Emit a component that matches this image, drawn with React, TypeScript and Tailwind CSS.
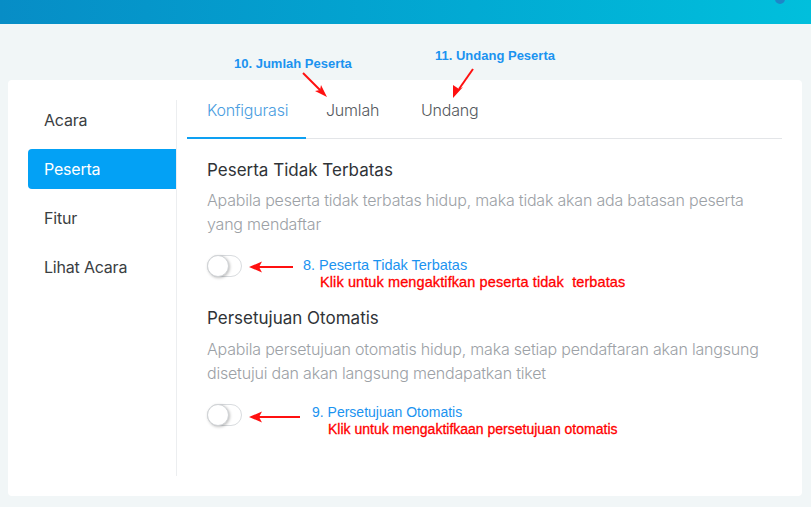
import React from "react";

const ui = { fontFamily: "Inter, 'Noto Sans', sans-serif" };
const ann = { fontFamily: "'Liberation Sans', Arial, sans-serif" };

function Toggle() {
  return (
    <div className="relative h-[22px] w-[35px] rounded-full border border-[#d9dcdf] bg-white">
      <div className="absolute left-[-1px] top-[-1px] h-[22px] w-[22px] rounded-full border border-[#d0d3d6] bg-white shadow-[1px_1px_3px_rgba(0,0,0,0.25)]" />
    </div>
  );
}

export default function App() {
  const menu = ["Acara", "Peserta", "Fitur", "Lihat Acara"];
  return (
    <div className="relative flex h-[507px] w-full flex-col overflow-hidden bg-[#f1f6f7] tracking-[-0.2px]" style={ui}>
      <div className="relative h-[24px] w-full bg-gradient-to-r from-[#078dc6] to-[#01bfdc]">
        <div className="absolute right-[26px] top-[-6px] h-[10px] w-[10px] rounded-full bg-[#1e86c8]" />
      </div>

      <div className="mx-[8px] mt-[56px] flex h-[416px] w-[794px] rounded-[4px] bg-white">
        <div className="my-[20px] flex w-[169px] flex-col gap-[9px] border-r border-[#eceef0] pl-[20px]">
          {menu.map((m) => (
            <div
              key={m}
              className={
                m === "Peserta"
                  ? "flex h-[40px] items-center rounded-l-[4px] bg-[#03a1f5] pl-[16px] text-[16px] text-white"
                  : "flex h-[40px] items-center pl-[16px] text-[16px] text-[#3a3e42]"
              }
            >
              {m}
            </div>
          ))}
        </div>

        <div className="flex flex-1 flex-col pl-[10px] pr-[20px] pt-[20px]">
          <div className="flex border-b border-[#e3e5e8]">
            <div className="-mb-px w-[119px] border-b-2 border-[#0ea0f2] pl-[20px] pb-[17px] text-[16px] font-light leading-[20px] text-[#4a9de0]">
              Konfigurasi
            </div>
            <div className="w-[95px] pl-[20px] pb-[17px] text-[16px] font-light leading-[20px] text-[#55595e]">Jumlah</div>
            <div className="pl-[20px] pb-[17px] text-[16px] font-light leading-[20px] text-[#55595e]">Undang</div>
          </div>

          <div className="flex flex-col pl-[20px]">
            <div className="mt-[19px] text-[17px] leading-[24px] tracking-normal text-[#2f3337]">Peserta Tidak Terbatas</div>
            <div className="mt-[6px] text-[16px] font-light leading-[24px] text-[#9ca1a6]">
              Apabila peserta tidak terbatas hidup, maka tidak akan ada batasan peserta yang mendaftar
            </div>
            <div className="mt-[19px]">
              <Toggle />
            </div>

            <div className="mt-[29px] text-[17px] leading-[24px] tracking-normal text-[#2f3337]">Persetujuan Otomatis</div>
            <div className="mt-[7px] text-[16px] font-light leading-[24px] text-[#9ca1a6]">
              Apabila persetujuan otomatis hidup, maka setiap pendaftaran akan langsung disetujui dan akan langsung mendapatkan tiket
            </div>
            <div className="mt-[19px]">
              <Toggle />
            </div>
          </div>
        </div>
      </div>

      {/* annotations */}
      <div style={ann} className="tracking-normal">
        <div className="absolute left-[234px] top-[56px] text-[13px] font-bold leading-[16px] text-[#1b93f0]">
          10. Jumlah Peserta
        </div>
        <div className="absolute left-[435px] top-[48px] text-[13px] font-bold leading-[16px] text-[#1b93f0]">
          11. Undang Peserta
        </div>
        <div className="absolute left-[303px] top-[257px] text-[14.5px] leading-[16px] text-[#1b93f0]">
          8. Peserta Tidak Terbatas
        </div>
        <div className="absolute left-[320px] top-[274px] whitespace-pre text-[14.5px] leading-[16px] tracking-[0.1px] text-[#ff0000] [-webkit-text-stroke:0.3px_#ff0000]">
          {"Klik untuk mengaktifkan peserta tidak  terbatas"}
        </div>
        <div className="absolute left-[312px] top-[404px] text-[14px] leading-[16px] text-[#1b93f0]">
          9. Persetujuan Otomatis
        </div>
        <div className="absolute left-[328px] top-[421px] text-[14px] leading-[16px] text-[#ff0000] [-webkit-text-stroke:0.3px_#ff0000]">
          Klik untuk mengaktifkaan persetujuan otomatis
        </div>
      </div>

      <svg className="pointer-events-none absolute left-0 top-0" width="811" height="507">
        <g stroke="#ff1010" strokeWidth="2" fill="none">
          <line x1="293" y1="267" x2="258" y2="267" />
          <line x1="300" y1="417" x2="259" y2="417" />
          <line x1="303" y1="73" x2="320" y2="90" />
          <line x1="473" y1="69" x2="459" y2="89" />
        </g>
        <g fill="#ff1010">
          <polygon points="249,267 262,261.5 259,267 262,272.5" />
          <polygon points="249,417 262,411.5 259,417 262,422.5" />
          <polygon points="327,97 315,91 320,90 321,85" />
          <polygon points="453,98 453,85 459,89 463,87" />
        </g>
      </svg>
    </div>
  );
}
